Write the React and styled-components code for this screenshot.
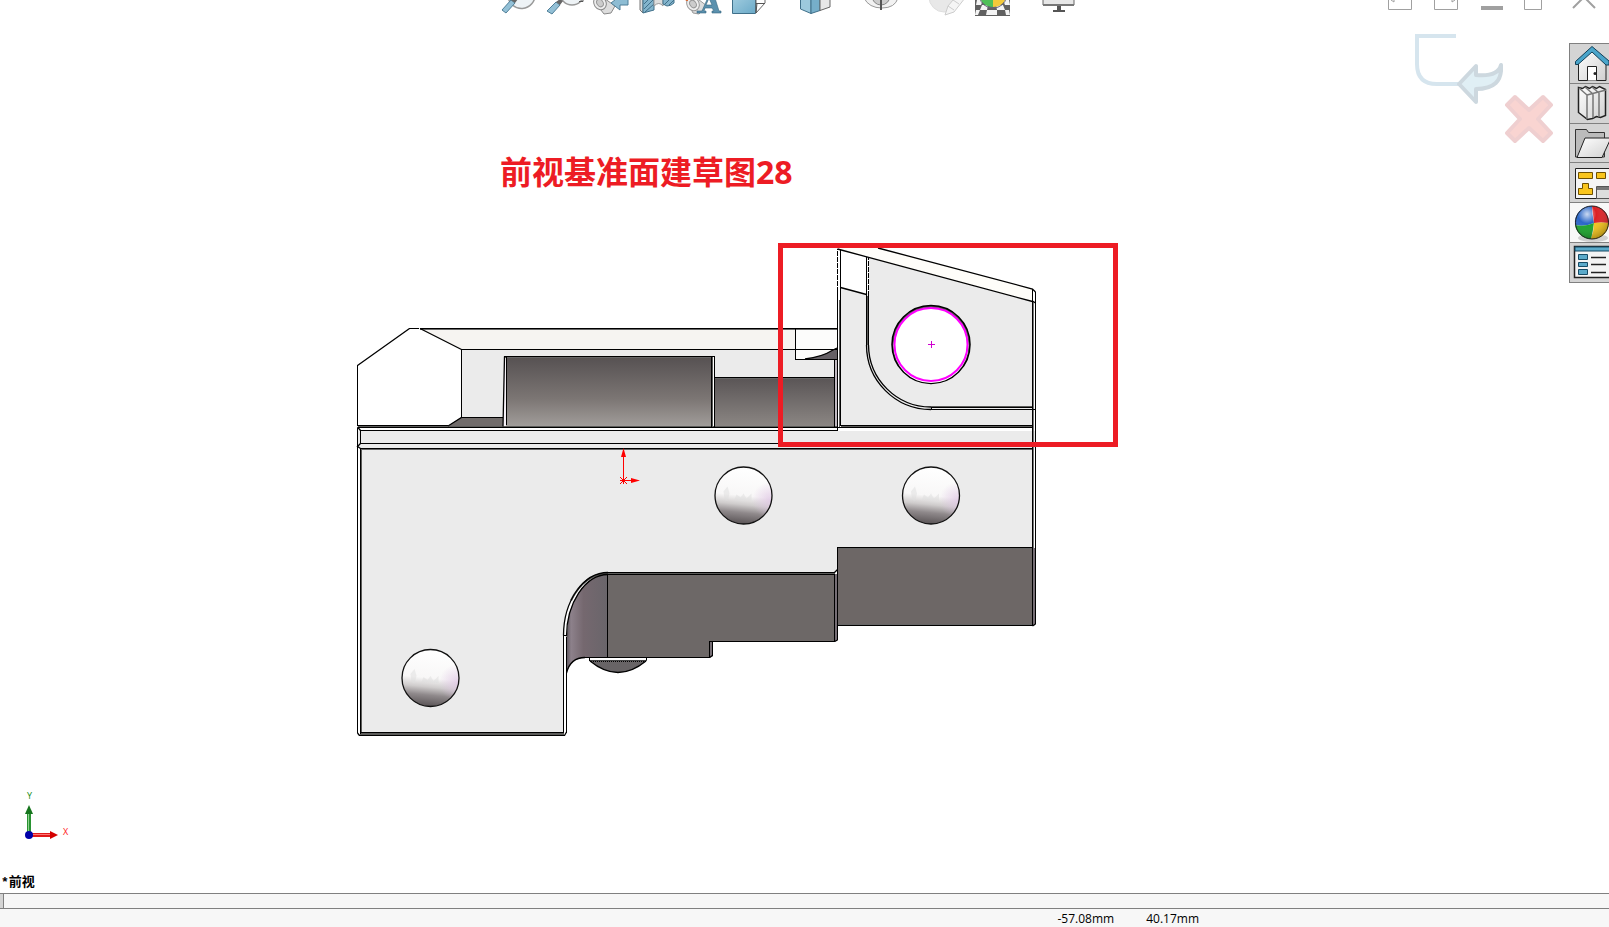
import React from 'react';
import styled, { createGlobalStyle } from 'styled-components';

const GlobalStyle = createGlobalStyle`
    * { box-sizing: border-box; }
    body {
        margin: 0;
        background: #fff;
        font-family: 'Open Sans', 'Noto Sans CJK SC', sans-serif;
        overflow: hidden;
    }
`
const Page = styled.div`
    display: flex;
    flex-direction: column;
    min-height: 100vh;
    background: #fff;
`
const TopBar = styled.header`
    display: flex;
    height: 17px;
    padding-right: 13px;
    overflow: hidden;
`
const ViewToolbar = styled.div`
    display: flex;
    gap: 10px;
    margin-left: 501px;
`
const WindowControls = styled.div`
    display: flex;
    gap: 22px;
    margin-left: auto;
`
const BarButton = styled.button`
    width: ${props => props.$wide ? '36px' : '24px'};
    height: 17px;
    margin: 0;
    margin-left: ${props => props.$spaced ? '20px' : '0'};
    padding: 0;
    border: 0;
    background: none;

    svg {
        display: block;
        overflow: visible;
    }
`
const Workspace = styled.div`
    display: flex;
    flex: 1;
`
const Viewport = styled.main`
    position: relative;
    flex: 1;
    overflow: hidden;
`
const Part = styled.svg`
    position: absolute;
    left: 350px;
    top: 223px;
`
const Note = styled.div`
    position: absolute;
    left: 500px;
    top: 132px;
    font-size: 32px;
    line-height: 46px;
    font-weight: 700;
    color: #ed1c24;
    white-space: nowrap;
`
const NoteFrame = styled.div`
    position: absolute;
    left: 778px;
    top: 226px;
    width: 340px;
    height: 204px;
    border: 5px solid #ed1c24;
`
const ConfirmCorner = styled.div`
    position: absolute;
    top: 14px;
    right: 15px;
    display: flex;
    align-items: flex-start;
`
const CornerButton = styled.button`
    margin: 0;
    margin-top: ${props => props.$low ? '62px' : '0'};
    padding: 0;
    border: 0;
    background: none;

    svg {
        display: block;
    }
`
const Triad = styled.svg`
    position: absolute;
    left: 0;
    bottom: 43px;
`
const ViewName = styled.div`
    position: absolute;
    left: 1px;
    bottom: 0;
    font-family: 'Liberation Mono', 'Noto Sans CJK SC', monospace;
    font-size: 13px;
    line-height: 20px;
    font-weight: 700;
    color: #000;
`
const TaskPane = styled.nav`
    display: flex;
    flex-direction: column;
    width: 40px;
    height: 240px;
    margin-top: 26px;
    border-left: 1px solid #808080;
    border-bottom: 1px solid #808080;
`
const PaneTab = styled.button`
    flex: 1;
    margin: 0;
    padding: 0;
    border: 0;
    border-top: 1px solid #808080;
    background: ${props => props.$active ? '#f8f8f8' : '#d4d4d4'};
    overflow: hidden;

    svg {
        display: block;
    }
`
const MotionBar = styled.div`
    height: 15px;
    border-top: 1px solid #808080;
    background: #f7f7f7;
`
const MotionHandle = styled.div`
    width: 4px;
    height: 14px;
    border-right: 1px solid #808080;
    background: #d4d4d4;
`
const StatusBar = styled.footer`
    display: flex;
    justify-content: flex-end;
    gap: 32px;
    height: 19px;
    padding-right: 410px;
    border-top: 1px solid #808080;
    background: #f7f7f7;
`
const Coordinate = styled.span`
    font-size: 12px;
    line-height: 20px;
    color: #000;
`

const viewTools = [
    {
        label: 'Zoom to fit',
        icon: <>
            <path d="M15-4a11 11 0 0 0 27-2" fill="#eef3f6" stroke="#999" strokeWidth="1.5" transform="translate(-8 0)" />
            <path d="M18 0l4-4 3 4z" fill="#dfe9ee" />
            <path d="M1 10L10 0l4 3L5 13z" fill="#93c0d6" stroke="#4f7f98" />
            <path d="M10 0l4 3 3-4-3-2z" fill="#666" />
        </>
    },
    {
        label: 'Zoom to area',
        icon: <>
            <circle cx="25" cy="-7" r="12" fill="#eef3f6" stroke="#999" strokeWidth="1.5" />
            <path d="M0 11L9 2l4 3-8 9z" fill="#93c0d6" stroke="#4f7f98" />
            <path d="M9 2l4 3 3-4-3-2z" fill="#666" />
            <path d="M32 1.5h4V-2" fill="none" stroke="#555" />
        </>
    },
    {
        label: 'Previous view',
        icon: <>
            <path d="M1 1l7-5 14 10-4 7-7 1z" fill="#ddd" stroke="#888" />
            <ellipse cx="7" cy="3" rx="6" ry="7" fill="#eee" stroke="#888" transform="rotate(-35 7 3)" />
            <ellipse cx="7" cy="3" rx="3" ry="4" fill="#ccc" stroke="#999" transform="rotate(-35 7 3)" />
            <path d="M18 3l9-7v3h8v6h-8v5z" fill="#8dbcd3" stroke="#4f7f98" />
        </>
    },
    {
        label: 'Section view',
        icon: <>
            <path d="M1 -1l3-2v16l-3-3z" fill="#ddd" stroke="#777" />
            <path d="M4 -1h11v11L4 13z" fill="#83b4cc" stroke="#40708a" />
            <path d="M5 4l5-5M5 9l9-9M6 12l9-8" stroke="#40708a" />
            <path d="M15 -1v7q5-5 9 0V-1z" fill="#ddd" stroke="#999" />
            <path d="M24 -1h11v4q-3 3-7 3l-4-2z" fill="#83b4cc" stroke="#40708a" />
            <path d="M25 5l6-6M30 5l5-5" stroke="#40708a" />
        </>
    },
    {
        label: 'Dynamic annotation views',
        icon: <>
            <path d="M2 1l7-5 13 10-8 8-6-1z" fill="#ddd" stroke="#999" />
            <ellipse cx="8" cy="4" rx="6" ry="7" fill="#eee" stroke="#999" transform="rotate(-35 8 4)" />
            <ellipse cx="8" cy="4" rx="3" ry="4" fill="#ccc" stroke="#999" transform="rotate(-35 8 4)" />
            <path d="M0-1h3v2H1z" fill="#d86b38" />
            <path d="M12 13h9v-2h-2l1-3h7l2 3h-2v2h9v-2h-2L29-5h-5l-7 16h-5zM21 5l3-7 3 7z" fill="#5b91ae" stroke="#35667f" strokeWidth=".6" />
        </>
    },
    {
        label: 'View orientation',
        icon: <>
            <defs>
                <linearGradient id="sheet" x2="1" y2="1">
                    <stop stopColor="#a5cfe1" />
                    <stop offset="1" stopColor="#6baac8" />
                </linearGradient>
            </defs>
            <path d="M1.500-5h23v18.500h-23z" fill="url(#sheet)" stroke="#40708a" />
            <path d="M25 -3h9v6l-9 10z" fill="#fff" stroke="#666" />
            <path d="M25 3.500h9M25 13l1-10" fill="none" stroke="#555" />
        </>
    },
    {
        label: 'Display style',
        spaced: true,
        icon: <>
            <path d="M3.500-5L14-3v16.500L3.500 9z" fill="#9cc9dd" stroke="#40708a" />
            <path d="M14 -3l9-3v16.500l-9 3z" fill="#76aec9" stroke="#40708a" />
            <path d="M23 -5h10V7l-10 3.500z" fill="#e8e8e8" stroke="#666" />
        </>
    },
    {
        label: 'Hide or show items',
        spaced: true,
        icon: <>
            <path d="M1 -2q5 10 18 10T35-2z" fill="#f2f2f2" stroke="#999" />
            <circle cx="18" cy="-4" r="9" fill="#ccc" stroke="#888" />
            <path d="M18 -4v14M10 -1h16" stroke="#555" strokeWidth="2" />
        </>
    },
    {
        label: 'Edit appearance',
        spaced: true,
        icon: <>
            <circle cx="15" cy="-3" r="15" fill="#e8e8e8" stroke="#dedede" />
            <path d="M16 15l3-9L29-6l7 4-11 14z" fill="#f5f5f5" stroke="#ccc" />
            <path d="M19 6l6 4M24 0l6 4" stroke="#ccc" />
        </>
    },
    {
        label: 'Apply scene',
        icon: <>
            <path d="M0-1h35v17H0z" fill="#606060" />
            <path d="M2 0h6L6 5H1zM7 5h6l-1 5H5zM21 5h7l2 5h-8zM28 0h6l1 5h-5zM1 10h4l-2 5H0zM12 10h10v5H11zM30 10h4l1 5h-4z" fill="#f4f4f4" />
            <path d="M5-4a13 11 0 0 0 13 11V-4z" fill="#4fbf58" />
            <path d="M18 7A13 11 0 0 0 31-4H18z" fill="#f2c93a" />
            <path d="M5-3a13 11 0 0 0 26 0" fill="none" stroke="#667" />
        </>
    },
    {
        label: 'View settings',
        spaced: true,
        icon: <>
            <path d="M2-5h31V5H2z" fill="#e7e7e7" stroke="#666" />
            <path d="M2 5h31" stroke="#777" strokeWidth="2" />
            <path d="M16 6h4v4h4v2H12v-2h4z" fill="#555" />
        </>
    },
];

const windowTools = [
    { label: 'Previous window', icon: <path d="M.5-4V9.500h23V-4M3 0l3 2V-2z" /> },
    { label: 'Next window', icon: <path d="M.5-4V9.500h23V-4M21 0l-3 2V-2z" /> },
    { label: 'Minimize', icon: <path d="M1 8h22" strokeWidth="4" /> },
    { label: 'Maximize', icon: <path d="M-1.500-4V9.500h17V-4" /> },
    { label: 'Close', icon: <path d="M1 8L22-13M23 8L2-13" strokeWidth="2" /> },
];

const paneTabs = [
    {
        label: 'Home',
        icon: <>
            <path d="M9.500 19L23 6l14 13v18.500H9.500z" fill="url(#paper)" stroke="#222" />
            <path d="M18.500 37.500v-14h9v14" fill="#fff" stroke="#222" />
            <circle cx="26" cy="30.500" r="1.500" fill="#222" />
            <path d="M6.500 18.500L23 3.500 40 18v4h-3L23 9 9 21.500H6.500z" fill="#4aa5ca" stroke="#123f57" />
        </>
    },
    {
        label: 'Design library',
        icon: <>
            <path d="M9.500 4.500l4 1 3-2 4 2 3-2 4 2 3-2 6 3v26l-5 2-4-1-4 2-5 1-9-7z" fill="url(#paper)" stroke="#222" strokeWidth="1.500" />
            <path d="M10 5l8 7v24M18 12l19-5M16 4l8 7v24M23 4l7 6v24" fill="none" stroke="#777" strokeWidth="1.500" />
        </>
    },
    {
        label: 'File explorer',
        icon: <>
            <path d="M6.500 34V6.500h11l2 3h16V34z" fill="#bbb" stroke="#333" />
            <path d="M8 34.500L16 15h26l-9 19.500z" fill="url(#paper)" stroke="#222" />
        </>
    },
    {
        label: 'View palette',
        icon: <>
            <path d="M6.500 6.500H41v30H6.500z" fill="#f4f4f4" stroke="#222" />
            <path d="M9.500 10.500h14v6h-14zM27.500 10.500h9v6h-9zM13.500 21.500h6v5h4v6h-14v-6h4z" fill="#f9c51d" stroke="#6f5100" />
            <path d="M27.500 24.500H42v12H27.500z" fill="#ddd" stroke="#555" />
            <path d="M28 25h14v3H28z" fill="#777" />
        </>
    },
    {
        label: 'Appearances and scenes',
        active: true,
        icon: <>
            <ellipse cx="24" cy="36" rx="15" ry="4" fill="#aaa" opacity=".5" />
            <path d="M25 21Q23 12 23 4a16.500 16.500 0 0 0-17 19q10 2 19-2z" fill="#2b67c7" />
            <path d="M25 21Q24 12 23 4a16.500 16.500 0 0 1 17 17q-8-1-15 0z" fill="#dc2024" />
            <path d="M25 21q-9 4-19 2a16.500 16.500 0 0 0 16 14q2-8 3-16z" fill="#18a329" />
            <path d="M25 21q8-1 15 0a16.500 16.500 0 0 1-18 16q3-8 3-16z" fill="#f4c318" />
            <circle cx="23" cy="20.500" r="16.500" fill="url(#gloss)" stroke="#222" />
        </>
    },
    {
        label: 'Custom properties',
        icon: <>
            <path d="M5.500 4.500H42v31H5.500z" fill="#f4f4f4" stroke="#222" strokeWidth="1.500" />
            <path d="M6 5h36v4H6z" fill="#5baaca" stroke="#164b65" />
            <path d="M9.500 12.500h9v5h-9zM9.500 20.500h9v4h-9zM9.500 27.500h9v5h-9z" fill="#5baaca" stroke="#164b65" />
            <path d="M22 15.500h15M22 22.500h15M22 30.500h15" stroke="#222" strokeWidth="1.500" />
        </>
    },
];

function IconDefs(){
    return(
        <defs>
            <linearGradient id="paper" x2="1" y2="1">
                <stop stopColor="#fff" />
                <stop offset="1" stopColor="#d0d0d0" />
            </linearGradient>
            <radialGradient id="gloss" cx=".35" cy=".25" r=".8">
                <stop stopColor="#fff" stopOpacity=".75" />
                <stop offset=".35" stopColor="#fff" stopOpacity="0" />
                <stop offset="1" stopColor="#000" stopOpacity=".3" />
            </radialGradient>
        </defs>
    )
}

function Pin({ x, y }){
    return(
        <g>
            <circle cx={x} cy={y} r="28.500" fill="url(#pin)" />
            <circle cx={x} cy={y} r="28.500" fill="url(#pinTint)" />
            <path d={`M${x - 20} ${y - 4}l4-5 2 7-2 8-3-2zM${x - 9} ${y + 4}l2-5 4 3 3-4 3 5 5-5v7z`} fill="#ddd" opacity=".5" />
            <circle cx={x} cy={y} r="28.500" fill="none" stroke="#111" strokeWidth="1.300" />
        </g>
    )
}

function PartDrawing(){
    return(
        <Part width="700" height="500" viewBox="350 240 700 500" role="img" aria-label="Part">
            <defs>
                <linearGradient id="slot" x2="0" y2="1">
                    <stop stopColor="#565152" />
                    <stop offset=".6" stopColor="#7c7674" />
                    <stop offset="1" stopColor="#a29e9b" />
                </linearGradient>
                <linearGradient id="slotShort" x2="0" y2="1">
                    <stop stopColor="#5a5556" />
                    <stop offset="1" stopColor="#8c8784" />
                </linearGradient>
                <linearGradient id="bend">
                    <stop stopColor="#615a61" />
                    <stop offset=".1" stopColor="#8d818b" />
                    <stop offset=".4" stopColor="#75686f" />
                    <stop offset="1" stopColor="#69656a" />
                </linearGradient>
                <linearGradient id="pin" x1=".55" x2=".45" y2="1">
                    <stop stopColor="#fff" />
                    <stop offset=".5" stopColor="#f8f7f7" />
                    <stop offset=".66" stopColor="#cfcccc" />
                    <stop offset=".8" stopColor="#8f898b" />
                    <stop offset="1" stopColor="#595355" />
                </linearGradient>
                <radialGradient id="pinTint" cx=".97" cy=".58" r=".32">
                    <stop stopColor="#dcc0e2" stopOpacity=".7" />
                    <stop offset="1" stopColor="#dcc0e2" stopOpacity="0" />
                </radialGradient>
            </defs>

            {/* faces */}
            <path d="M420 329h417v21H461z" fill="#f6f4f1" />
            <path d="M461 350h376v77H461zM358 431h677v17H358zM360 449h673v98H838v25H608a44 60 0 0 0-44 62v99H360z" fill="#ebebeb" />
            <path d="M461 417h42v9h-55z" fill="#716c6b" />
            <path d="M504 357h3v69h-4z" fill="#f7f2f8" />
            <path d="M506 357h205v70H506z" fill="url(#slot)" />
            <path d="M713 357h1v70h-1z" fill="#fff" />
            <path d="M715 378h119v49H715z" fill="url(#slotShort)" />
            <path d="M834 360h3v67h-3z" fill="#c2bac2" />
            <path d="M796 329h41v31h-41z" fill="#fcfcfb" />
            <path d="M805 359q17-2 32-11v11z" fill="#656065" />
            <path d="M840 248h38l155 41v13L840 250z" fill="#fefdf9" />
            <path d="M840 250l193 52v124H840z" fill="#ebebeb" />
            <path d="M841 250l26 7v38l-26-8z" fill="#fff" />
            <path d="M837.500 547.500h195v78.500h-195z" fill="#6d6766" />
            <path d="M608 574h227v67H710v17H608z" fill="#6d6867" />
            <path d="M608 574a42 60 0 0 0-41 60v38q4-14 18-14h23z" fill="url(#bend)" />
            <path d="M1033 548h3v76l-3 2zM835 574h3v66l-3 2zM710 642h3v14l-3 2z" fill="#766e75" />
            <path d="M590 661q28 23 56 0z" fill="#686466" />

            {/* narrow bevels between the edge pairs */}
            <g fill="none" stroke="#5c5c5a" shapeRendering="crispEdges">
                <path d="M358 426.500h90M448 426.500h390M841 426.500h192M608 573.500h227M360 734.500h204M360 733.500h204" />
                <path d="M712.500 357v70M839.500 300v127M867.500 296v49M361.500 449v284M931 406.500h102" />
                <path d="M1033.500 302v246" stroke="#777" />
                <path d="M360 449.500h672M837 548.500h196M838 624.500h195M420 329.500h417M504 357.500h207M715 378.500h119" stroke="#666" />
            </g>

            {/* straight edges */}
            <g fill="none" stroke="#000" shapeRendering="crispEdges">
                <path d="M357.500 365v61M409 328.500h10M420 328.500h417M461 349.500h376M461.500 349v68M461 417.500h42M358 425.500h90M358 427.500h480M360 430.500h478M360 443.500h672M360 448.500h672" />
                <path d="M504 356.500h211M506.500 357v68M711.500 357v70M714.500 357v70M714 377.500h120M834.500 360v67M795.500 329v31M795 359.500h42M837.500 249v182M840.500 250v176" />
                <path d="M840 425.500h193M838 427.500h195M1032.500 289v337M1035.500 292v332M931 407.500h102M931 409.500h105" />
                <path d="M866.500 257v88M868.500 258v87M931.500 407v3" />
                <path d="M357.500 428v305M360.500 431v12M360.500 448v286M360 732.500h204M359 735.500h206M563.500 635v98M566.500 637v96M564 635.500h3" />
                <path d="M837.500 547v93M837 547.500h196M838 625.500h195M834.500 574v67M608 572.500h227M608 574.500h227M607.500 573v85M709.500 641v17M712.500 642v14M709 641.500h126M585 657.500h125" />
                <path d="M589.500 658v3M646.500 658v3" />
                <path d="M590 660.500h57" stroke="#444" />
                <path d="M591 661.500h55" strokeDasharray="1 1" />
            </g>
            <path d="M838.500 250v38M867.500 260v33" stroke="#fff" strokeDasharray="5 1" shapeRendering="crispEdges" />
            <path d="M837.500 250v38M868.500 260v33" stroke="#fff" strokeDasharray="1 5" shapeRendering="crispEdges" />

            {/* slanted and curved edges */}
            <path d="M608 573.500c-17 0-29 11-37 27" fill="none" stroke="#5c5c5a" strokeWidth="2" />
            <g fill="none" stroke="#000" strokeWidth="1.300">
                <path d="M357.500 365.500L409.500 328.500M420 328.500l41.500 21M448 426l13.500-8.500M504.500 356.500l-1.500 70M357.500 427l3 3.500M360.500 443.500l-3 3 3 2" />
                <path d="M805 359q17-2 28-9l4-2M837.500 249l195 52.500M878 248l154.500 41 3 3M840.500 287.500l26 7M1032.500 301l3 2" />
                <path d="M866.500 345a64.500 64.500 0 0 0 64.500 64.500M868.500 345a62.500 62.500 0 0 0 62.500 62" />
                <path d="M608 572.500c-25 0-44.500 29-44.500 63M608 574.500c-23 0-41.500 29-41.500 62" />
                <path d="M566.500 673q4-15.500 18.500-15.500M590 661q28 23 56 0M357.500 733l2 2.500M566.500 732l-2 3.500M1032.500 626l3-2M834.500 641.500l3-1.500M709.500 657.500l3-2M834.500 572.500l3-3" />
            </g>

            <circle cx="931" cy="344.500" r="39" fill="#5c5759" stroke="#000" strokeWidth="1.500" />
            <circle cx="931" cy="345.500" r="37.500" fill="#fff" />
            <circle cx="931" cy="344.500" r="36.500" fill="none" stroke="#f0f" strokeWidth="2" />
            <path d="M931.500 341v7M928 344.500h7" stroke="#d000d0" shapeRendering="crispEdges" />

            <Pin x={743.5} y={495.5} />
            <Pin x={931} y={495.5} />
            <Pin x={430.5} y={678} />

            {/* origin */}
            <path d="M623.500 480V455M624 480.500h8M620 477l7 7M627 477l-7 7M620 480.500h4M623.500 480v4" stroke="red" />
            <path d="M623.500 448l2.500 9h-5zM640 480.500l-9 2.500v-5z" fill="red" />
        </Part>
    )
}

function App(){
    return(
        <Page>
            <GlobalStyle />
            <TopBar>
                <ViewToolbar>
                    {viewTools.map(tool => (
                        <BarButton key={tool.label} $wide $spaced={tool.spaced} aria-label={tool.label}>
                            <svg width="36" height="17" viewBox="0 0 36 17">{tool.icon}</svg>
                        </BarButton>
                    ))}
                </ViewToolbar>
                <WindowControls>
                    {windowTools.map(tool => (
                        <BarButton key={tool.label} aria-label={tool.label}>
                            <svg width="24" height="17" viewBox="0 0 24 17" fill="none" stroke="#a0a0a0">{tool.icon}</svg>
                        </BarButton>
                    ))}
                </WindowControls>
            </TopBar>

            <Workspace>
                <Viewport>
                    <PartDrawing />
                    <Note>前视基准面建草图28</Note>
                    <NoteFrame />

                    <ConfirmCorner>
                        <CornerButton aria-label="Exit sketch">
                            <svg width="90" height="75" viewBox="1413 31 90 75">
                                <path d="M1456 36h-39v28q0 20 20 20h22" fill="none" stroke="#d6e5ee" strokeWidth="4" />
                                <path d="M1459 84l17-18v9q22 2 25-10 2 24-25 24v13z" fill="#e0eff5" stroke="#cdd8df" strokeWidth="4" strokeLinejoin="round" />
                            </svg>
                        </CornerButton>
                        <CornerButton $low aria-label="Cancel sketch">
                            <svg width="51" height="52" viewBox="1503 93 51 52">
                                <path d="M1515 97l14 13 14-13 8 8-13 14 13 14-8 8-14-13-14 13-8-8 13-14-13-14z" fill="#f9d4d1" stroke="#efcfd0" strokeWidth="4" strokeLinejoin="round" />
                            </svg>
                        </CornerButton>
                    </ConfirmCorner>

                    <Triad width="80" height="60" viewBox="0 790 80 60" role="img" aria-label="Axes">
                        <path d="M27 812h4v22h-4z" fill="#299332" />
                        <path d="M28.500 812v20" stroke="#8ed18e" />
                        <path d="M29 805l4 9h-8z" fill="#16751d" />
                        <path d="M31 833h20v4H31z" fill="#e01818" />
                        <path d="M32 834.500h18" stroke="#ff7777" />
                        <path d="M58 835l-8 4v-8z" fill="#d40000" />
                        <circle cx="29" cy="835" r="4" fill="#0000a8" />
                        <text x="27" y="799" fontSize="9" fill="#128a12">Y</text>
                        <text x="63" y="835" fontSize="9" fill="#ff2020">X</text>
                    </Triad>
                    <ViewName>*前视</ViewName>
                </Viewport>

                <TaskPane>
                    {paneTabs.map(tab => (
                        <PaneTab key={tab.label} $active={tab.active} aria-label={tab.label}>
                            <svg width="39" height="39" viewBox="1 1 39 39"><IconDefs />{tab.icon}</svg>
                        </PaneTab>
                    ))}
                </TaskPane>
            </Workspace>

            <MotionBar>
                <MotionHandle />
            </MotionBar>
            <StatusBar>
                <Coordinate>-57.08mm</Coordinate>
                <Coordinate>40.17mm</Coordinate>
            </StatusBar>
        </Page>
    )
}

export default App;
